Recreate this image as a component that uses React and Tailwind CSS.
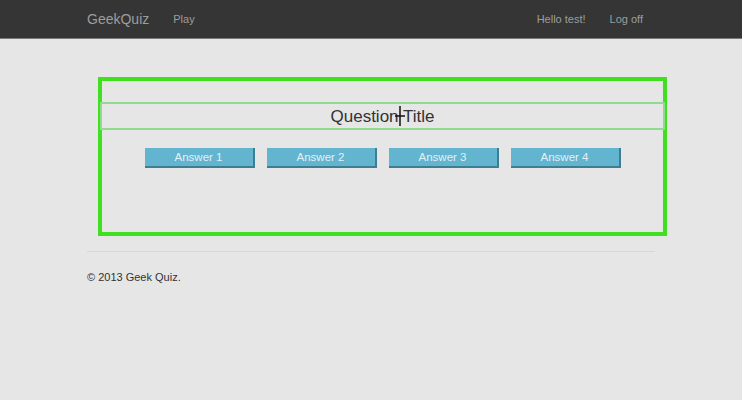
const answers = ['Answer 1', 'Answer 2', 'Answer 3', 'Answer 4'];

const App = () => {
  return (
    <div className="min-h-[400px] bg-[#e6e6e6] font-['Liberation_Sans',Arial,sans-serif]">
      <div className="h-[39px] bg-[#353535] border-b border-[#7a7a7a]">
        <div className="w-[568px] mx-auto h-full flex items-center">
          <span className="text-[14px] text-[#9d9d9d]">GeekQuiz</span>
          <span className="ml-[24px] text-[11px] text-[#9d9d9d]">Play</span>
          <span className="ml-auto text-[11px] text-[#9d9d9d]">Hello test!</span>
          <span className="ml-[24px] mr-[12px] text-[11px] text-[#9d9d9d]">Log off</span>
        </div>
      </div>

      <div className="w-[568px] mx-auto">
        <div className="mt-[38px] ml-[11px] w-[569px] h-[159px] border-[4px] border-[#40e01e] pt-[21px]">
          <div className="relative -mx-[2px] h-[28px] border-2 border-[#8fdc8f] flex items-center justify-center">
            <span className="text-[17px] text-[#333] pt-[2px]">Question Title</span>
            <svg className="absolute left-[293px] top-[2px]" width="10" height="20" viewBox="0 0 10 20">
              <path d="M5 0 V20 M0 10 H10" stroke="#111" strokeWidth="1.5" fill="none" />
            </svg>
          </div>
          <div className="mt-[18px] flex justify-center gap-[12px]">
            {answers.map((a) => (
              <button
                key={a}
                className="w-[110px] h-[20px] pt-[2px] bg-[#62b4cf] border-b-2 border-r-2 border-[#3e7e92] text-[11.5px] text-[#e2f1f6] leading-none"
              >
                {a}
              </button>
            ))}
          </div>
        </div>

        <div className="mt-[15px] border-t border-[#d8d8d8]"></div>
        <div className="mt-[17px] text-[11px] text-[#333]">© 2013 Geek Quiz.</div>
      </div>
    </div>
  );
};

export default App;
